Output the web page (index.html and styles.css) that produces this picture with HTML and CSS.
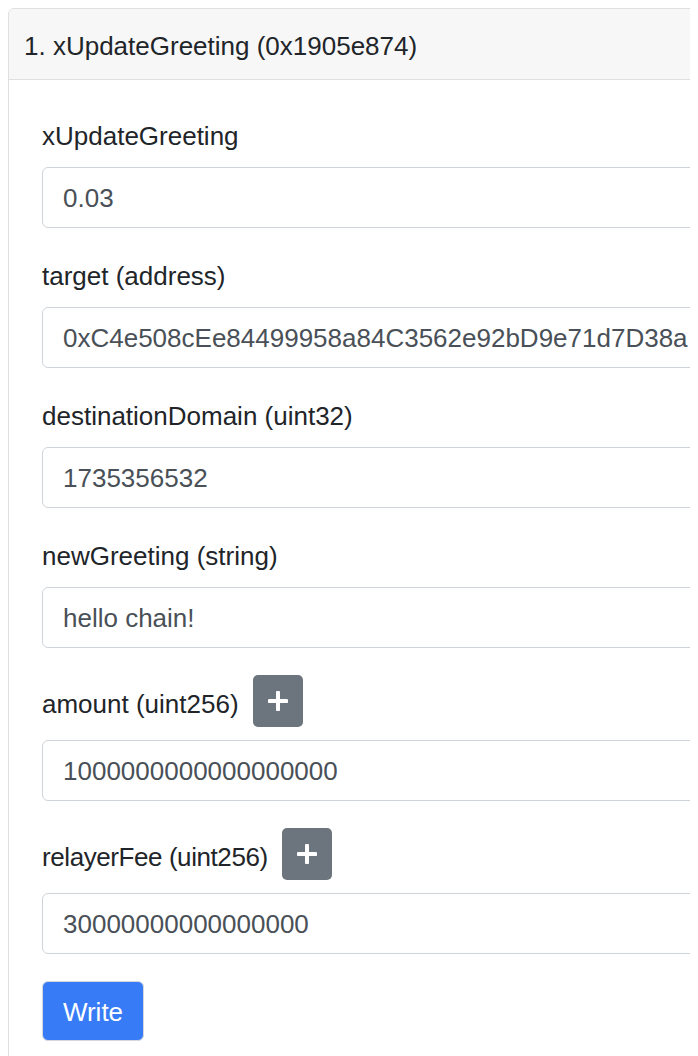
FILE: index.html
```html
<!DOCTYPE html>
<html lang="en">
<head>
<meta charset="utf-8">
<title>xUpdateGreeting</title>
<link rel="stylesheet" href="styles.css">
</head>
<body>
<div class="card">
  <div class="card-header">1. xUpdateGreeting (0x1905e874)</div>
  <div class="card-body">
    <div class="form-group">
      <label class="label">xUpdateGreeting</label>
      <input class="input" type="text" value="0.03">
    </div>
    <div class="form-group">
      <label class="label">target (address)</label>
      <input class="input" type="text" value="0xC4e508cEe84499958a84C3562e92bD9e71d7D38a">
    </div>
    <div class="form-group">
      <label class="label">destinationDomain (uint32)</label>
      <input class="input" type="text" value="1735356532">
    </div>
    <div class="form-group">
      <label class="label">newGreeting (string)</label>
      <input class="input" type="text" value="hello chain!">
    </div>
    <div class="form-group">
      <div class="label-row">
        <span class="label-text">amount (uint256)</span>
        <button class="btn-plus" type="button" aria-label="add">
          <svg width="20" height="20" viewBox="0 0 20 20"><path d="M10 1.5v17M1.5 10h17" stroke="#fff" stroke-width="4" stroke-linecap="round"/></svg>
        </button>
      </div>
      <input class="input" type="text" value="1000000000000000000">
    </div>
    <div class="form-group">
      <div class="label-row">
        <span class="label-text label-tight">relayerFee (uint256)</span>
        <button class="btn-plus" type="button" aria-label="add">
          <svg width="20" height="20" viewBox="0 0 20 20"><path d="M10 1.5v17M1.5 10h17" stroke="#fff" stroke-width="4" stroke-linecap="round"/></svg>
        </button>
      </div>
      <input class="input" type="text" value="30000000000000000">
    </div>
    <button class="btn-write" type="button">Write</button>
  </div>
</div>
</body>
</html>
```
FILE: styles.css
```css
html, body {
  overflow: hidden;
}
body {
  margin: 8px;
  font-family: "Liberation Sans", Arial, Helvetica, sans-serif;
  font-size: 26px;
  line-height: 39px;
  color: #212529;
  background: #fff;
}
.card {
  width: 780px;
  border: 1px solid #dfdfdf;
  border-radius: 6px;
  background: #fff;
}
.card-header {
  background: #f7f7f7;
  border-bottom: 1px solid #dfdfdf;
  padding: 17.5px 15px 13.5px;
  border-radius: 6px 6px 0 0;
}
.card-body {
  padding: 35px 32.5px 32px 33px;
}
.form-group {
  margin-bottom: 27px;
}
.label {
  display: block;
  padding-top: 2px;
  margin-bottom: 11px;
}
.label-row {
  display: flex;
  align-items: center;
  height: 52px;
  margin-bottom: 13px;
}
.label-text {
  padding-top: 6px;
}
.label-tight {
  letter-spacing: -0.42px;
}
.btn-plus {
  margin-left: 14px;
  width: 50px;
  height: 52px;
  border: none;
  border-radius: 5px;
  background: #6c757d;
  display: flex;
  align-items: center;
  justify-content: center;
  padding: 0;
}
.input {
  display: block;
  box-sizing: border-box;
  width: 100%;
  height: 61px;
  padding: 11px 20px 9px;
  font-family: inherit;
  font-size: 26px;
  line-height: 39px;
  color: #495057;
  border: 1px solid #ced4da;
  border-radius: 6px;
  background: #fff;
  outline: none;
}
.btn-write {
  display: block;
  margin-top: 2px;
  width: 102px;
  height: 60px;
  padding: 2px 0 0;
  font-family: inherit;
  font-size: 26px;
  color: #fff;
  background: #377bf6;
  border: 1.5px solid #d5d9de;
  border-radius: 6px;
}
```
